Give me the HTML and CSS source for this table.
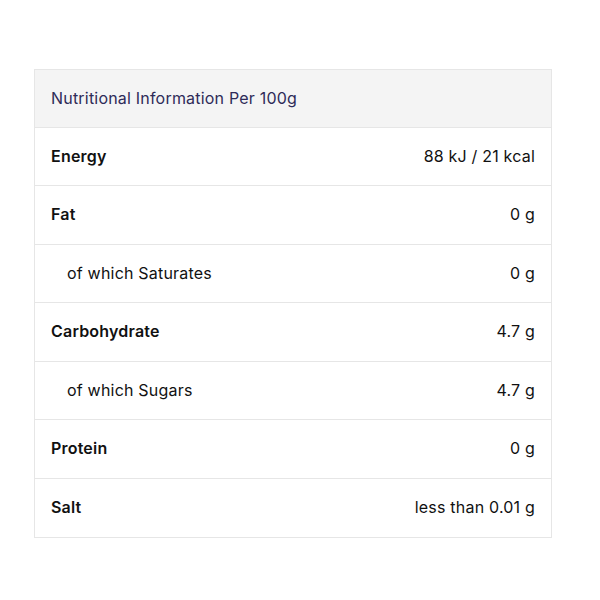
FILE: index.html
```html
<!DOCTYPE html>
<html>
<head>
<meta charset="utf-8">
<link rel="stylesheet" href="styles.css">
</head>
<body>
<div class="page">
  <div class="nutri">
    <div class="row head">Nutritional Information Per 100g</div>
    <div class="row"><span class="label">Energy</span><span class="value">88 kJ / 21 kcal</span></div>
    <div class="row"><span class="label">Fat</span><span class="value">0 g</span></div>
    <div class="row sub"><span class="label">of which Saturates</span><span class="value">0 g</span></div>
    <div class="row"><span class="label">Carbohydrate</span><span class="value">4.7 g</span></div>
    <div class="row sub"><span class="label">of which Sugars</span><span class="value">4.7 g</span></div>
    <div class="row"><span class="label">Protein</span><span class="value">0 g</span></div>
    <div class="row"><span class="label">Salt</span><span class="value">less than 0.01 g</span></div>
  </div>
</div>
</body>
</html>
```
FILE: styles.css
```css
* { box-sizing: border-box; }
body {
  margin: 0;
  background: #fff;
  font-family: "Inter", "Open Sans", sans-serif;
  color: #111;
}
.page {
  padding: 69px 48px 0 34px;
}
.nutri {
  border: 1px solid #e6e6e6;
  border-bottom: none;
}
.row {
  display: flex;
  justify-content: space-between;
  align-items: center;
  padding: 18px 16px;
  line-height: 21.6px;
  font-size: 16px;
  letter-spacing: 0.2px;
  border-bottom: 1px solid #e6e6e6;
}
.head {
  background: #f4f4f4;
  color: #2e2b58;
  padding-top: 17px;
  padding-bottom: 17px;
  line-height: 22.5px;
}
.label {
  font-weight: 600;
}
.sub .label {
  font-weight: 400;
  padding-left: 16px;
}
.value {
  font-weight: 400;
}
```
